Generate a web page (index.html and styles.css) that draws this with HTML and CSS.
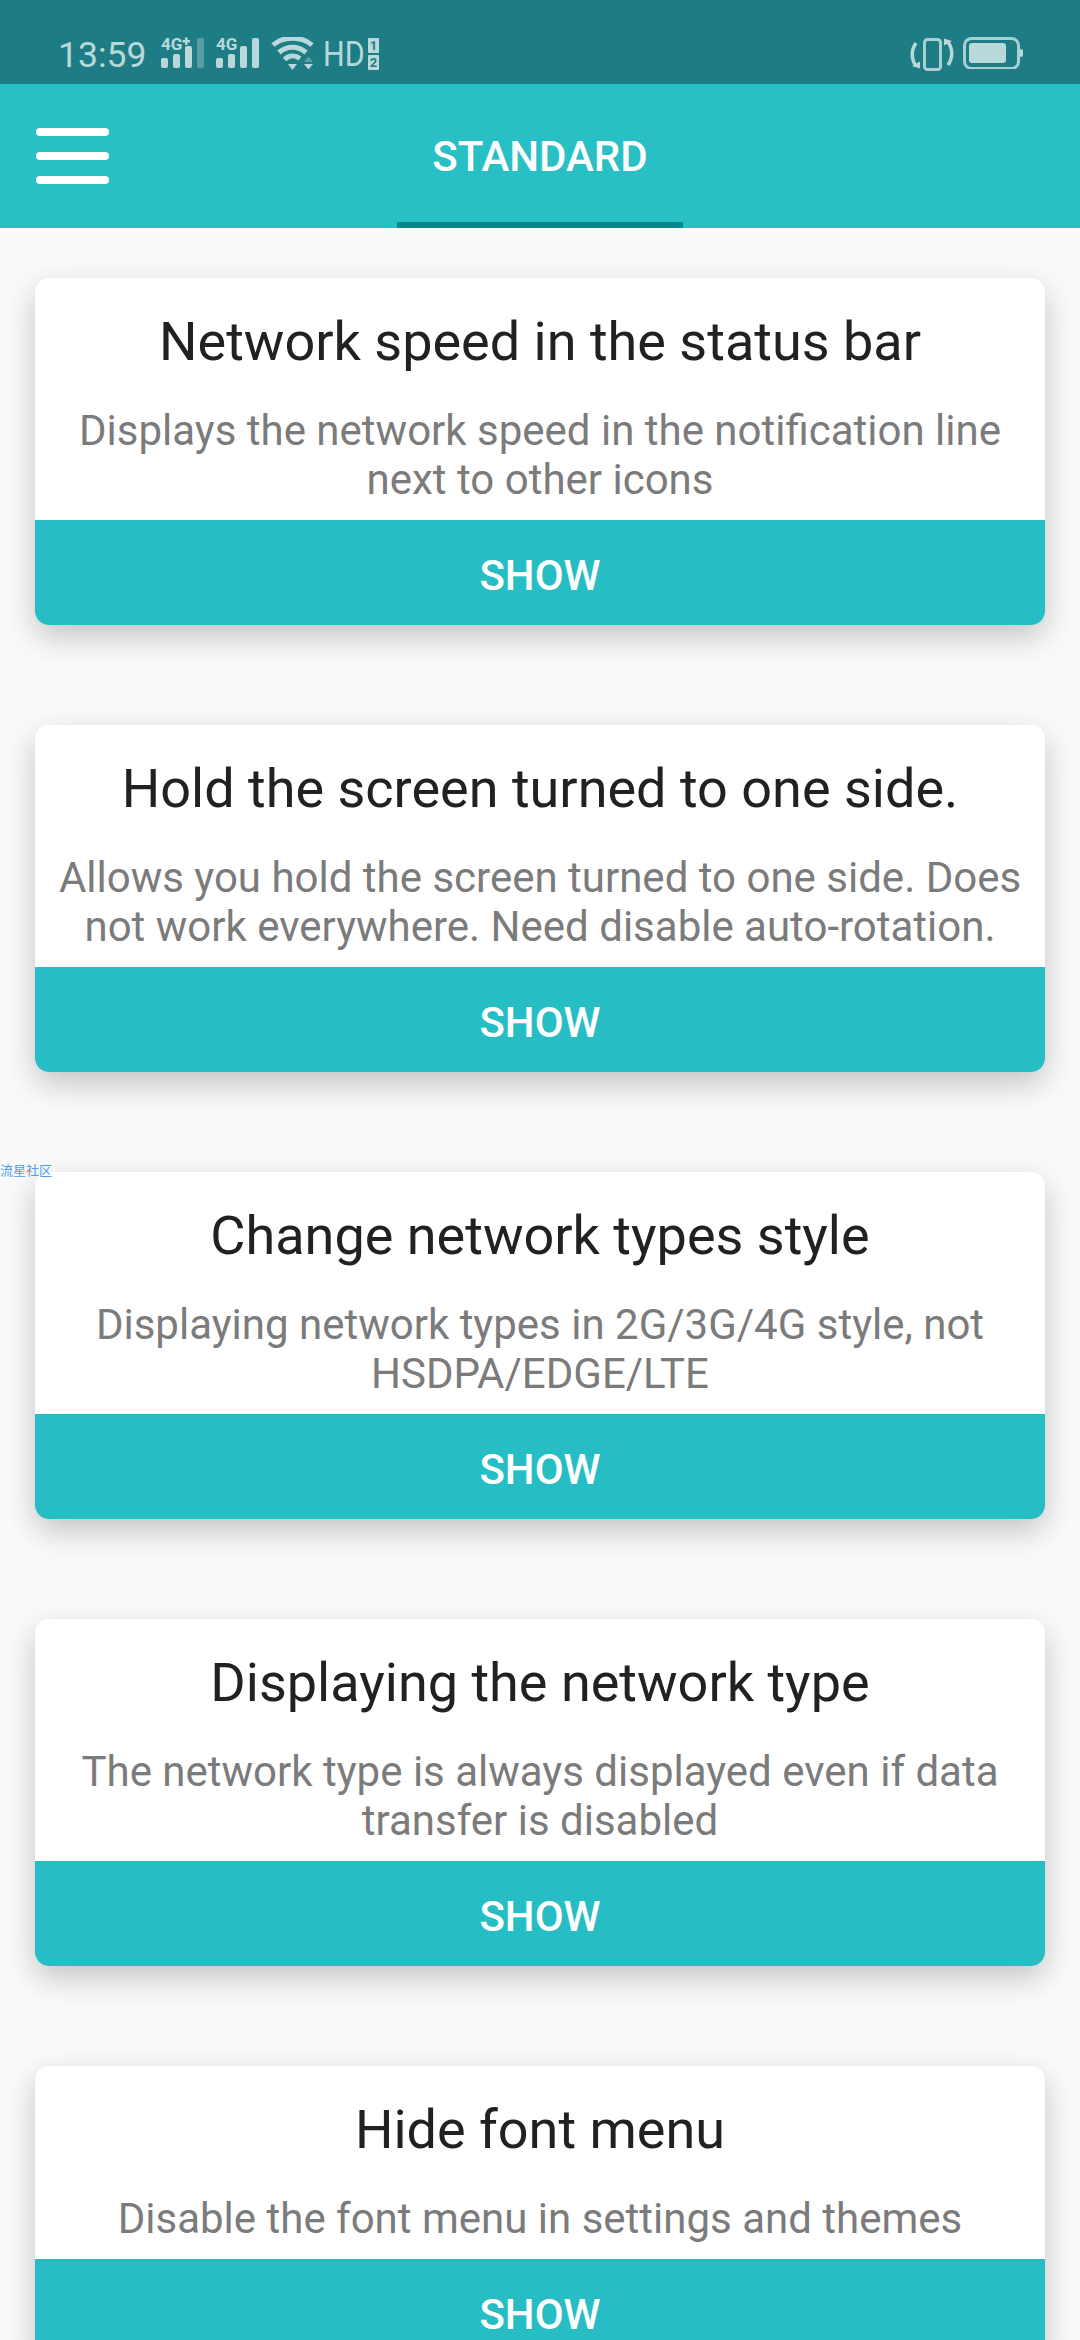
FILE: index.html
```html
<!DOCTYPE html>
<html lang="en">
<head>
    <meta charset="UTF-8">
    <meta name="viewport" content="width=device-width, initial-scale=1.0">
    <title>Standard</title>
    <link rel="stylesheet" href="styles.css">
</head>
<body>

<div class="status-bar">
    <span class="clock">13:59</span>
    <svg class="sig" width="43" height="40" viewBox="0 -8 43 40">
        <text x="0" y="13" class="sig-text">4G</text>
        <rect x="21.500" y="3" width="7.500" height="2.500" class="ico"/>
        <rect x="24" y="0.500" width="2.500" height="7.500" class="ico"/>
        <rect x="0" y="21" width="7" height="10" rx="2" class="ico"/>
        <rect x="12" y="17" width="7" height="14" rx="2" class="ico"/>
        <rect x="24" y="9" width="7" height="22" rx="2" class="ico"/>
        <rect x="36" y="1" width="7" height="30" rx="2" class="ico dim"/>
    </svg>
    <svg class="sig" width="43" height="40" viewBox="0 -8 43 40">
        <text x="0" y="13" class="sig-text">4G</text>
        <rect x="0" y="21" width="7" height="10" rx="2" class="ico"/>
        <rect x="12" y="17" width="7" height="14" rx="2" class="ico"/>
        <rect x="24" y="9" width="7" height="22" rx="2" class="ico"/>
        <rect x="36" y="1" width="7" height="30" rx="2" class="ico"/>
    </svg>
    <svg class="wifi" width="43" height="34" viewBox="0 0 43 34">
        <path d="M2 8C12 -1 31 -1 41 8" class="arc"/>
        <path d="M8 15.500C16 8.500 27 8.500 35 15.500" class="arc"/>
        <path d="M13.500 22.500C18 18 24 18 29 21.500" class="arc"/>
        <path d="M17 27h9l-4.500 6z" class="ico"/>
        <path d="M33 25l4.500 -5.500 4.500 5.500z" class="ico dim"/>
        <path d="M33 27h9l-4.500 5.500z" class="ico"/>
    </svg>
    <span class="hd">HD</span>
    <div class="sim">
        <span class="sim-num">1</span>
        <span class="sim-num">2</span>
    </div>
    <div class="status-right">
        <svg width="44" height="34" viewBox="0 0 44 34">
            <rect x="14.500" y="2.500" width="16" height="30" rx="3" class="box"/>
            <path d="M6 6C1 13 1 22 6 29" class="arc thin"/>
            <path d="M38 5C43 12 43 21 38 28" class="arc thin"/>
            <path d="M2 29l8 2.500 0 -7z" class="ico"/>
            <path d="M42 4l-8 -2.500 0 7z" class="ico"/>
        </svg>
        <svg width="60" height="32" viewBox="0 0 60 32">
            <rect x="1.500" y="1.500" width="54" height="30" rx="7" class="box"/>
            <rect x="6" y="6" width="37" height="20" rx="3" class="ico"/>
            <rect x="56" y="12" width="4" height="8" rx="2" class="ico"/>
        </svg>
    </div>
</div>

<div class="toolbar">
    <div class="menu-btn">
        <span></span><span></span><span></span>
    </div>
    <div class="tab">STANDARD</div>
</div>

<div class="watermark">流星社区</div>

<div class="list">
    <div class="card">
        <h2>Network speed in the status bar</h2>
        <p>Displays the network speed in the notification line next to other icons</p>
        <button>SHOW</button>
    </div>
    <div class="card">
        <h2>Hold the screen turned to one side.</h2>
        <p>Allows you hold the screen turned to one side. Does not work everywhere. Need disable auto-rotation.</p>
        <button>SHOW</button>
    </div>
    <div class="card">
        <h2>Change network types style</h2>
        <p>Displaying network types in 2G/3G/4G style, not HSDPA/EDGE/LTE</p>
        <button>SHOW</button>
    </div>
    <div class="card">
        <h2>Displaying the network type</h2>
        <p>The network type is always displayed even if data transfer is disabled</p>
        <button>SHOW</button>
    </div>
    <div class="card">
        <h2>Hide font menu</h2>
        <p>Disable the font menu in settings and themes</p>
        <button>SHOW</button>
    </div>
</div>

</body>
</html>
```

FILE: styles.css
```css
html, body {
    margin: 0;
    height: 2340px;
    overflow: hidden;
}
body {
    position: relative;
    background-color: #fafafa;
    font-family: Roboto, sans-serif;
}
.status-bar {
    height: 84px;
    box-sizing: border-box;
    padding: 37px 57px 0 58px;
    display: flex;
    align-items: flex-start;
    background-color: #1e7d84;
    color: #b9d8da;
}
.clock {
    width: 88px;
    margin-right: 15px;
    font-size: 35.500px;
    line-height: 36px;
}
.sig {
    margin: -8px 12px 0 0;
}
.wifi {
    margin-right: 9px;
}
.sig-text {
    font-family: Roboto, sans-serif;
    font-size: 17px;
    font-weight: 700;
    fill: #b9d8da;
}
.ico {
    fill: #b9d8da;
}
.dim {
    fill: #5a9ea2;
}
.arc {
    fill: none;
    stroke: #b9d8da;
    stroke-width: 5;
    stroke-linecap: butt;
}
.arc.thin {
    stroke-width: 3.500;
}
.box {
    fill: none;
    stroke: #a9cfd1;
    stroke-width: 3;
}
.hd {
    width: 42px;
    margin-right: 3px;
    font-size: 35px;
    line-height: 36px;
    transform: scaleX(.87);
    transform-origin: left;
}
.sim {
    display: flex;
    flex-direction: column;
    gap: 2px;
    padding-top: 1px;
}
.sim-num {
    width: 11px;
    height: 15px;
    border-radius: 1px;
    background-color: #b9d8da;
    color: #1e7d84;
    font-size: 13px;
    line-height: 15px;
    font-weight: 700;
    text-align: center;
}
.status-right {
    margin-left: auto;
    display: flex;
    gap: 9px;
}
.toolbar {
    height: 144px;
    display: flex;
    justify-content: center;
    position: relative;
    background-color: #28bfc5;
}
.menu-btn {
    position: absolute;
    left: 36px;
    top: 44px;
    width: 73px;
    display: flex;
    flex-direction: column;
    gap: 16px;
}
.menu-btn span {
    height: 8px;
    border-radius: 4px;
    background-color: #fff;
}
.tab {
    width: 286px;
    box-sizing: border-box;
    height: 144px;
    line-height: 100px;
    padding-top: 23px;
    border-bottom: 6px solid #07868c;
    color: #fff;
    font-size: 42px;
    font-weight: 500;
    text-align: center;
}
.watermark {
    position: absolute;
    left: 0;
    top: 1162px;
    color: #4a9df0;
    font-family: "Noto Sans CJK SC", sans-serif;
    font-size: 13px;
    line-height: 16px;
    z-index: 2;
}
.list {
    padding: 50px 35px 0;
    display: flex;
    flex-direction: column;
    gap: 100px;
}
.card {
    border-radius: 14px;
    overflow: hidden;
    flex-shrink: 0;
    background-color: #fff;
    box-shadow: 0 12px 32px rgba(0, 0, 0, .22);
    text-align: center;
}
.card h2 {
    margin: 0;
    padding: 35px 10px 0;
    color: #212121;
    font-size: 54px;
    line-height: 58px;
    font-weight: 400;
}
.card p {
    margin: 0;
    padding: 35px 20px 0;
    color: #7b7b7b;
    font-size: 42px;
    line-height: 49px;
}
.card button {
    display: block;
    width: 100%;
    height: 105px;
    margin-top: 16px;
    padding: 5px 0 0;
    border: none;
    background-color: #26bec4;
    color: #fff;
    font-family: Roboto, sans-serif;
    font-size: 42px;
    font-weight: 500;
}
```
